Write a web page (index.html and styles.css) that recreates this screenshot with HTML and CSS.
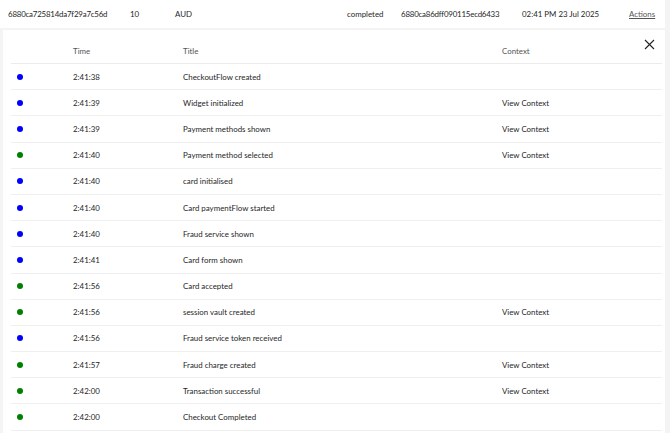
FILE: index.html
```html
<!DOCTYPE html>
<html>
<head>
<meta charset="utf-8">
<link rel="stylesheet" href="styles.css">
</head>
<body>
<div class="page">
  <div class="summary">
    <span class="c-id">6880ca725814da7f29a7c56d</span>
    <span class="c-amt">10</span>
    <span class="c-cur">AUD</span>
    <span class="c-status">completed</span>
    <span class="c-ref">6880ca86dff090115ecd6433</span>
    <span class="c-date">02:41 PM 23 Jul 2025</span>
    <a class="c-actions">Actions</a>
  </div>
  <div class="panel">
    <button class="close" aria-label="Close">
      <svg width="11" height="11" viewBox="0 0 11 11"><path d="M1 1L10 10M10 1L1 10" stroke="#222" stroke-width="1.1" fill="none"/></svg>
    </button>
    <div class="table">
      <div class="row head">
        <span></span><span>Time</span><span>Title</span><span>Context</span>
      </div>
      <div class="row"><span class="dot blue"></span><span>2:41:38</span><span>CheckoutFlow created</span><span></span></div>
      <div class="row"><span class="dot blue"></span><span>2:41:39</span><span>Widget initialized</span><span>View Context</span></div>
      <div class="row"><span class="dot blue"></span><span>2:41:39</span><span>Payment methods shown</span><span>View Context</span></div>
      <div class="row"><span class="dot green"></span><span>2:41:40</span><span>Payment method selected</span><span>View Context</span></div>
      <div class="row"><span class="dot blue"></span><span>2:41:40</span><span>card initialised</span><span></span></div>
      <div class="row"><span class="dot blue"></span><span>2:41:40</span><span>Card paymentFlow started</span><span></span></div>
      <div class="row"><span class="dot blue"></span><span>2:41:40</span><span>Fraud service shown</span><span></span></div>
      <div class="row"><span class="dot blue"></span><span>2:41:41</span><span>Card form shown</span><span></span></div>
      <div class="row"><span class="dot green"></span><span>2:41:56</span><span>Card accepted</span><span></span></div>
      <div class="row"><span class="dot green"></span><span>2:41:56</span><span>session vault created</span><span>View Context</span></div>
      <div class="row"><span class="dot blue"></span><span>2:41:56</span><span>Fraud service token received</span><span></span></div>
      <div class="row"><span class="dot green"></span><span>2:41:57</span><span>Fraud charge created</span><span>View Context</span></div>
      <div class="row"><span class="dot green"></span><span>2:42:00</span><span>Transaction successful</span><span>View Context</span></div>
      <div class="row"><span class="dot green"></span><span>2:42:00</span><span>Checkout Completed</span><span></span></div>
    </div>
  </div>
</div>
</body>
</html>
```
FILE: styles.css
```css
html, body {
  margin: 0;
  padding: 0;
  background: #f4f4f4;
  overflow: hidden;
}
body {
  font-family: "Lato", "Open Sans", sans-serif;
  font-size: 7.9px;
  color: #262626;
}
.page {
  width: 665px;
  display: flex;
  flex-direction: column;
  gap: 2px;
}
.summary {
  background: #fff;
  height: 28px;
  display: flex;
  align-items: center;
  padding-left: 8px;
  white-space: nowrap;
}
.c-id { width: 122px; letter-spacing: -0.2px; }
.c-amt { width: 45px; }
.c-cur { width: 172px; }
.c-status { width: 54px; }
.c-ref { width: 121px; letter-spacing: -0.2px; }
.c-date { width: 107px; }
.c-actions { text-decoration: underline; color: #555; }
.panel {
  background: #fff;
  margin-left: 3px;
  position: relative;
  padding: 0 3px 4px 8px;
  height: 420px;
}
.close {
  position: absolute;
  right: 10px;
  top: 9px;
  border: 0;
  background: none;
  padding: 0;
  width: 11px;
  height: 11px;
  display: flex;
}
.table {
  display: flex;
  flex-direction: column;
}
.row {
  display: grid;
  grid-template-columns: 62px 110px 319px 1fr;
  align-items: center;
  height: 26.2px;
  border-bottom: 1px solid #efefef;
  box-sizing: border-box;
}
.row.head {
  height: 34px;
  padding-top: 8px;
  color: #555;
  border-bottom: 1px solid #ececec;
}
.dot {
  width: 6px;
  height: 6px;
  border-radius: 50%;
  margin-left: 6px;
}
.dot.blue { background: #0000ff; }
.dot.green { background: #008000; }
```
